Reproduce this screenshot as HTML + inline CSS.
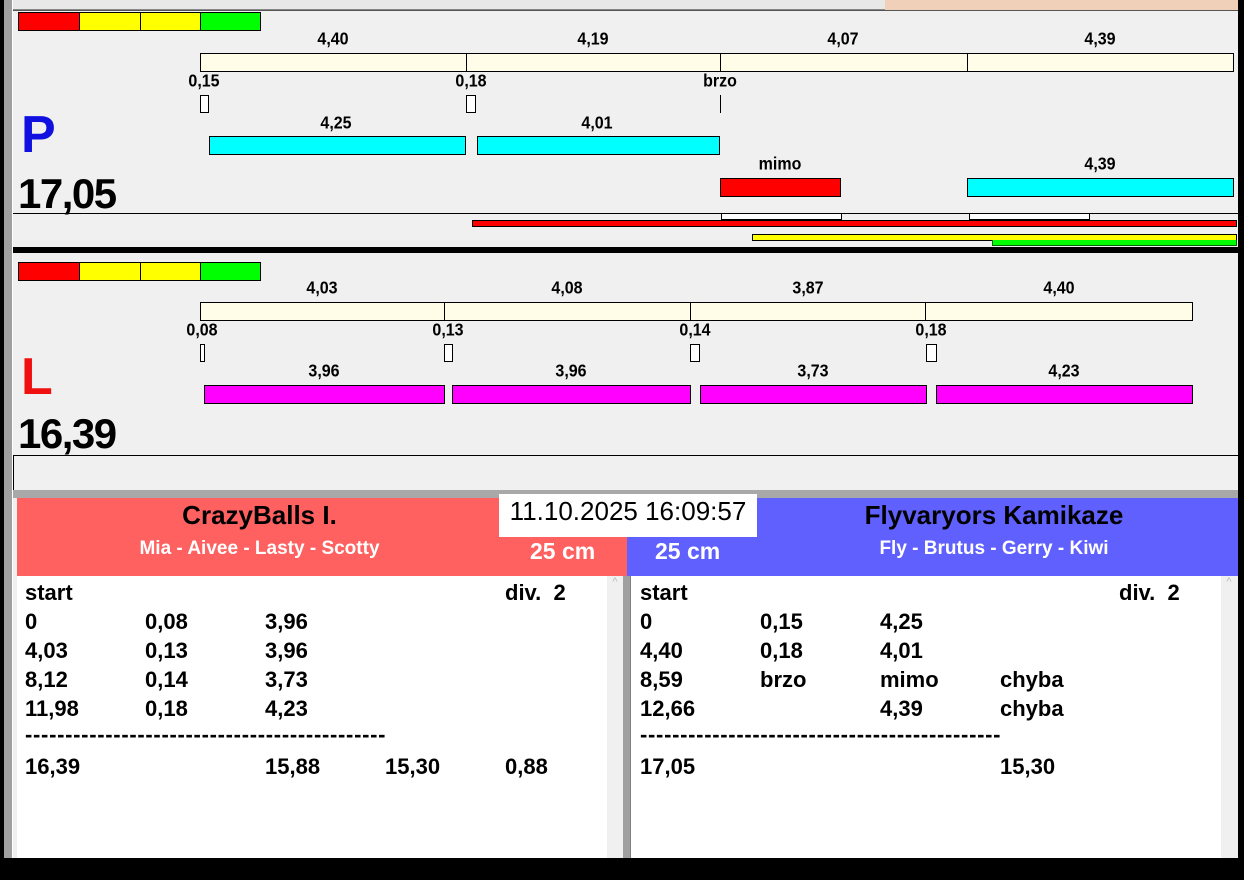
<!DOCTYPE html>
<html><head><meta charset="utf-8"><style>
*{margin:0;padding:0;box-sizing:border-box}
body{width:1244px;height:880px;position:relative;background:#f0f0f0;font-family:"Liberation Sans",Arial,sans-serif;overflow:hidden}
div{position:absolute}
.b{border:1px solid #000}
.t{font-weight:bold;font-size:16px;color:#000;white-space:nowrap;transform:translateX(-50%) scaleY(1.12)}
.r{font-weight:bold;font-size:22px;color:#000;white-space:nowrap}
.w{color:#fff;font-weight:bold;white-space:nowrap}
</style></head><body>
<!-- frame -->
<div style="left:0;top:0;width:4px;height:880px;background:#000"></div>
<div style="left:4px;top:0;width:9px;height:880px;background:#a0a0a0;border-right:1px solid #fff"></div>
<div style="left:1238px;top:0;width:6px;height:880px;background:#000"></div>
<div style="left:13px;top:0;width:872px;height:10px;background:#e8e8e8;border-bottom:1px solid #888"></div>
<div style="left:885px;top:0;width:353px;height:11px;background:#f0d0b8"></div>
<div style="left:13px;top:10px;width:1225px;height:1px;background:#555"></div>
<!-- P section -->
<div class="b" style="left:18px;top:12px;width:62px;height:19px;background:#f00"></div>
<div class="b" style="left:79px;top:12px;width:62px;height:19px;background:#ff0"></div>
<div class="b" style="left:140px;top:12px;width:61px;height:19px;background:#ff0"></div>
<div class="b" style="left:200px;top:12px;width:61px;height:19px;background:#0f0"></div>
<div class="t" style="left:333px;top:31px">4,40</div>
<div class="t" style="left:593px;top:31px">4,19</div>
<div class="t" style="left:843px;top:31px">4,07</div>
<div class="t" style="left:1100px;top:31px">4,39</div>
<div class="b" style="left:200px;top:53px;width:267px;height:19px;background:#fffde8"></div>
<div class="b" style="left:466px;top:53px;width:255px;height:19px;background:#fffde8"></div>
<div class="b" style="left:720px;top:53px;width:248px;height:19px;background:#fffde8"></div>
<div class="b" style="left:967px;top:53px;width:267px;height:19px;background:#fffde8"></div>
<div class="t" style="left:204px;top:73px">0,15</div>
<div class="t" style="left:471px;top:73px">0,18</div>
<div class="t" style="left:720px;top:73px">brzo</div>
<div class="b" style="left:200px;top:95px;width:9px;height:18px;background:#fff"></div>
<div class="b" style="left:466px;top:95px;width:10px;height:18px;background:#fff"></div>
<div style="left:720px;top:95px;width:1px;height:18px;background:#000"></div>
<div style="left:21px;top:105px;font-weight:bold;font-size:52px;color:#1010e0">P</div>
<div class="t" style="left:336px;top:115px">4,25</div>
<div class="t" style="left:597px;top:115px">4,01</div>
<div class="b" style="left:209px;top:136px;width:257px;height:19px;background:#0ff"></div>
<div class="b" style="left:477px;top:136px;width:243px;height:19px;background:#0ff"></div>
<div class="t" style="left:780px;top:156px">mimo</div>
<div class="t" style="left:1100px;top:156px">4,39</div>
<div class="b" style="left:720px;top:178px;width:121px;height:19px;background:#f00"></div>
<div class="b" style="left:967px;top:178px;width:267px;height:19px;background:#0ff"></div>
<div style="left:18px;top:170px;font-weight:bold;font-size:42px;letter-spacing:-1.5px">17,05</div>
<div style="left:13px;top:213px;width:1225px;height:1px;background:#000"></div>
<div class="b" style="left:721px;top:213px;width:121px;height:7px;background:#fff"></div>
<div class="b" style="left:969px;top:213px;width:121px;height:7px;background:#fff"></div>
<div class="b" style="left:472px;top:220px;width:765px;height:7px;background:#f00"></div>
<div class="b" style="left:752px;top:234px;width:485px;height:7px;background:#ff0"></div>
<div style="left:992px;top:240px;width:245px;height:6px;background:#0f0;border:1px solid #060;border-top:0"></div>
<div style="left:13px;top:247px;width:1225px;height:6px;background:#000"></div>
<!-- L section -->
<div class="b" style="left:18px;top:262px;width:62px;height:19px;background:#f00"></div>
<div class="b" style="left:79px;top:262px;width:62px;height:19px;background:#ff0"></div>
<div class="b" style="left:140px;top:262px;width:61px;height:19px;background:#ff0"></div>
<div class="b" style="left:200px;top:262px;width:61px;height:19px;background:#0f0"></div>
<div class="t" style="left:322px;top:280px">4,03</div>
<div class="t" style="left:567px;top:280px">4,08</div>
<div class="t" style="left:808px;top:280px">3,87</div>
<div class="t" style="left:1059px;top:280px">4,40</div>
<div class="b" style="left:200px;top:302px;width:245px;height:19px;background:#fffde8"></div>
<div class="b" style="left:444px;top:302px;width:247px;height:19px;background:#fffde8"></div>
<div class="b" style="left:690px;top:302px;width:236px;height:19px;background:#fffde8"></div>
<div class="b" style="left:925px;top:302px;width:268px;height:19px;background:#fffde8"></div>
<div class="t" style="left:202px;top:322px">0,08</div>
<div class="t" style="left:448px;top:322px">0,13</div>
<div class="t" style="left:695px;top:322px">0,14</div>
<div class="t" style="left:931px;top:322px">0,18</div>
<div class="b" style="left:200px;top:344px;width:5px;height:18px;background:#fff"></div>
<div class="b" style="left:444px;top:344px;width:9px;height:18px;background:#fff"></div>
<div class="b" style="left:690px;top:344px;width:10px;height:18px;background:#fff"></div>
<div class="b" style="left:926px;top:344px;width:11px;height:18px;background:#fff"></div>
<div style="left:21px;top:347px;font-weight:bold;font-size:52px;color:#f01010">L</div>
<div class="t" style="left:324px;top:363px">3,96</div>
<div class="t" style="left:571px;top:363px">3,96</div>
<div class="t" style="left:813px;top:363px">3,73</div>
<div class="t" style="left:1064px;top:363px">4,23</div>
<div class="b" style="left:204px;top:385px;width:241px;height:19px;background:#f0f"></div>
<div class="b" style="left:452px;top:385px;width:239px;height:19px;background:#f0f"></div>
<div class="b" style="left:700px;top:385px;width:227px;height:19px;background:#f0f"></div>
<div class="b" style="left:936px;top:385px;width:257px;height:19px;background:#f0f"></div>
<div style="left:18px;top:410px;font-weight:bold;font-size:42px;letter-spacing:-1.5px">16,39</div>
<div style="left:13px;top:455px;width:1225px;height:35px;border-top:1px solid #000;border-left:1px solid #000"></div>
<div style="left:13px;top:490px;width:1225px;height:8px;background:#a8a8a8"></div>
<!-- headers -->
<div style="left:17px;top:498px;width:610px;height:78px;background:#ff6060"></div>
<div style="left:627px;top:498px;width:611px;height:78px;background:#6060ff"></div>
<div style="left:17px;top:500px;width:485px;text-align:center;font-weight:bold;font-size:26px">CrazyBalls I.</div>
<div class="w" style="left:17px;top:538px;width:485px;text-align:center;font-size:19px">Mia - Aivee - Lasty - Scotty</div>
<div class="w" style="left:530px;top:538px;font-size:23px">25 cm</div>
<div class="w" style="left:655px;top:538px;font-size:23px">25 cm</div>
<div style="left:750px;top:500px;width:488px;text-align:center;font-weight:bold;font-size:26px">Flyvaryors Kamikaze</div>
<div class="w" style="left:750px;top:538px;width:488px;text-align:center;font-size:19px">Fly - Brutus - Gerry - Kiwi</div>
<div style="left:499px;top:494px;width:258px;height:43px;background:#fff;font-size:26px;text-align:center;line-height:34px">11.10.2025 16:09:57</div>
<!-- panels -->
<div style="left:17px;top:576px;width:590px;height:282px;background:#fff"></div>
<div style="left:607px;top:576px;width:16px;height:282px;background:#f0f0f0;color:#bbb;font-size:11px;text-align:center">^</div>
<div style="left:623px;top:576px;width:8px;height:282px;background:#a0a0a0;border-right:1px solid #808080"></div>
<div style="left:631px;top:576px;width:590px;height:282px;background:#fff"></div>
<div style="left:1221px;top:576px;width:16px;height:282px;background:#f0f0f0;color:#bbb;font-size:11px;text-align:center">^</div>
<div style="left:0;top:858px;width:1244px;height:22px;background:#000"></div>
<!-- left text -->
<div class="r" style="left:25px;top:580px">start</div><div class="r" style="left:505px;top:580px">div.&nbsp; 2</div>
<div class="r" style="left:25px;top:609px">0</div><div class="r" style="left:145px;top:609px">0,08</div><div class="r" style="left:265px;top:609px">3,96</div>
<div class="r" style="left:25px;top:638px">4,03</div><div class="r" style="left:145px;top:638px">0,13</div><div class="r" style="left:265px;top:638px">3,96</div>
<div class="r" style="left:25px;top:667px">8,12</div><div class="r" style="left:145px;top:667px">0,14</div><div class="r" style="left:265px;top:667px">3,73</div>
<div class="r" style="left:25px;top:696px">11,98</div><div class="r" style="left:145px;top:696px">0,18</div><div class="r" style="left:265px;top:696px">4,23</div>
<div class="r" style="left:25px;top:722px;letter-spacing:0.7px">---------------------------------------------</div>
<div class="r" style="left:25px;top:754px">16,39</div><div class="r" style="left:265px;top:754px">15,88</div><div class="r" style="left:385px;top:754px">15,30</div><div class="r" style="left:505px;top:754px">0,88</div>
<!-- right text -->
<div class="r" style="left:640px;top:580px">start</div><div class="r" style="left:1119px;top:580px">div.&nbsp; 2</div>
<div class="r" style="left:640px;top:609px">0</div><div class="r" style="left:760px;top:609px">0,15</div><div class="r" style="left:880px;top:609px">4,25</div>
<div class="r" style="left:640px;top:638px">4,40</div><div class="r" style="left:760px;top:638px">0,18</div><div class="r" style="left:880px;top:638px">4,01</div>
<div class="r" style="left:640px;top:667px">8,59</div><div class="r" style="left:760px;top:667px">brzo</div><div class="r" style="left:880px;top:667px">mimo</div><div class="r" style="left:1000px;top:667px">chyba</div>
<div class="r" style="left:640px;top:696px">12,66</div><div class="r" style="left:880px;top:696px">4,39</div><div class="r" style="left:1000px;top:696px">chyba</div>
<div class="r" style="left:640px;top:722px;letter-spacing:0.7px">---------------------------------------------</div>
<div class="r" style="left:640px;top:754px">17,05</div><div class="r" style="left:1000px;top:754px">15,30</div>
</body></html>
